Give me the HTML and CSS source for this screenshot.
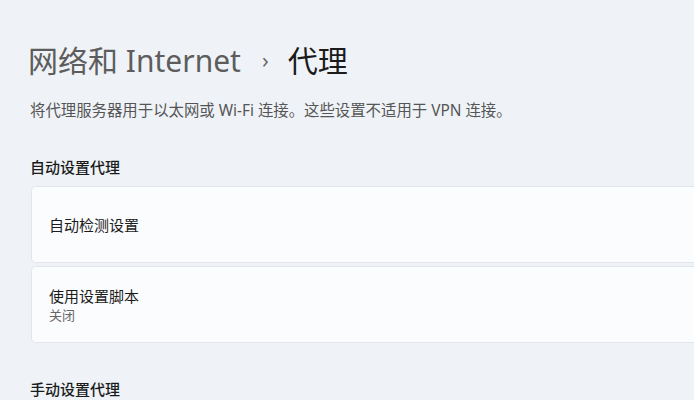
FILE: index.html
```html
<!DOCTYPE html>
<html lang="zh-CN">
<head>
    <meta charset="UTF-8">
    <meta name="viewport" content="width=device-width, initial-scale=1.0">
    <title>代理</title>
    <link rel="stylesheet" href="styles.css">
</head>
<body>
    <div class="page">
        <h1 class="crumbs">
            <span class="parent">网络和 Internet</span>
            <span class="chev">›</span>
            <span class="current">代理</span>
        </h1>

        <p class="desc">将代理服务器用于以太网或 Wi-Fi 连接。这些设置不适用于 VPN 连接。</p>

        <h3 class="section">自动设置代理</h3>
        <div class="card">
            <div class="label">自动检测设置</div>
        </div>
        <div class="card">
            <div class="label">使用设置脚本</div>
            <div class="sub">关闭</div>
        </div>

        <h3 class="section manual">手动设置代理</h3>
    </div>
</body>
</html>
```

FILE: styles.css
```css
body {
    margin: 0;
    background-color: #eff3f7;
    font-family: "Noto Sans", "Noto Sans CJK SC", sans-serif;
    color: #1b1b1b;
    overflow: hidden;
}

.page {
    padding: 36px 0 0 28px;
}

.crumbs {
    margin: 0;
    font-size: 30px;
    font-weight: 400;
    line-height: 46px;
    display: flex;
    align-items: center;
}

.parent {
    color: #5d5d5d;
}

.chev {
    color: #6a6a6a;
    font-size: 22px;
    margin: 0 19px 4px 21px;
}

.current {
    color: #1b1b1b;
}

.desc {
    margin: 15px 0 0 2px;
    font-size: 15.4px;
    line-height: 20px;
    color: #555;
}

.section {
    margin: 35px 0 0 2px;
    font-size: 15px;
    font-weight: 500;
    line-height: 22px;
    color: #1b1b1b;
}

.section.manual {
    margin-top: 35px;
}

.card {
    margin: 8px 0 0 3px;
    background-color: #fbfcfd;
    border: 1px solid #e3e6e9;
    border-right: none;
    border-radius: 5px 0 0 5px;
    height: 75px;
    padding: 0 17px;
    display: flex;
    flex-direction: column;
    justify-content: center;
}

.card + .card {
    margin-top: 3px;
}

.label {
    font-size: 15px;
    line-height: 20px;
    color: #1b1b1b;
}

.sub {
    font-size: 13px;
    line-height: 18px;
    color: #666;
}
```
